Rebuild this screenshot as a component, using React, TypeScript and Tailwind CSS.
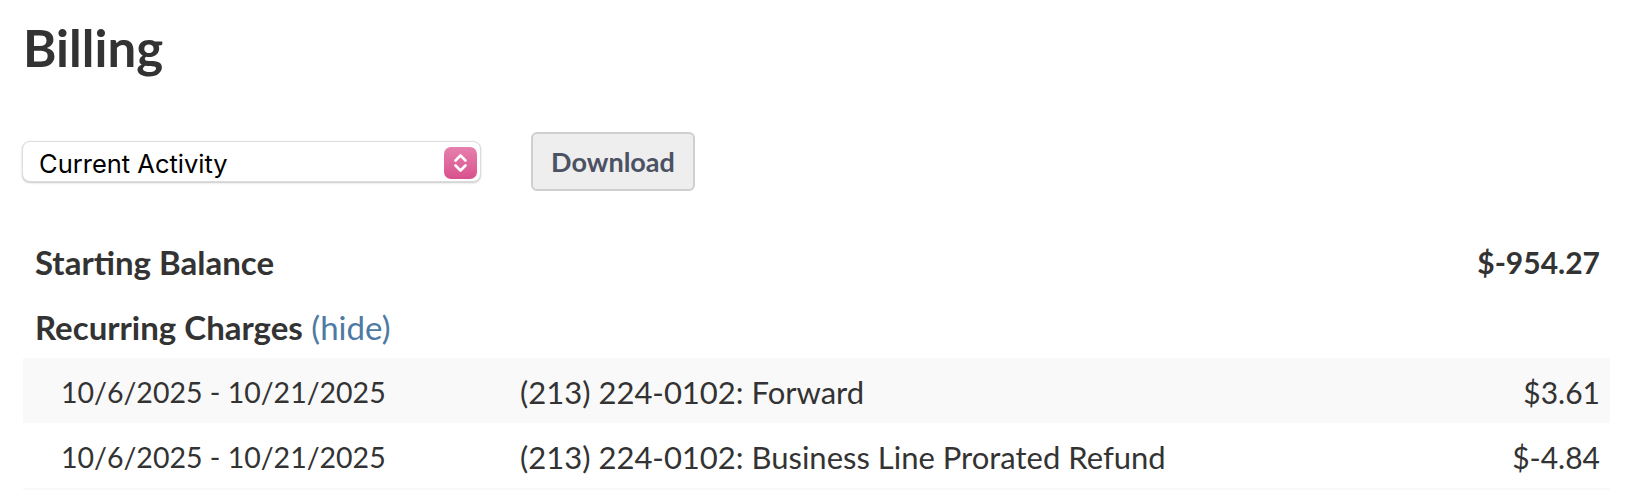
import { useState } from 'react'

type Charge = {
  period: string
  description: string
  amount: string
}

const recurring: Charge[] = [
  { period: '10/6/2025 - 10/21/2025', description: '(213) 224-0102: Forward', amount: '$3.61' },
  { period: '10/6/2025 - 10/21/2025', description: '(213) 224-0102: Business Line Prorated Refund', amount: '$-4.84' },
]

function Stepper() {
  return (
    <div className="absolute right-[3px] top-[5px] flex h-[32px] w-[33px] items-center justify-center rounded-[7px] bg-gradient-to-b from-[#e680ad] to-[#d8518d]">
      <svg width="33" height="32" viewBox="0 0 33 32" fill="none">
        <path d="M11.5 13.5 L16.5 8.5 L21.5 13.5" stroke="white" strokeWidth="2.6" strokeLinecap="round" strokeLinejoin="round" />
        <path d="M11.5 18.5 L16.5 23.5 L21.5 18.5" stroke="white" strokeWidth="2.6" strokeLinecap="round" strokeLinejoin="round" />
      </svg>
    </div>
  )
}

export default function App() {
  const [showRecurring, setShowRecurring] = useState(true)

  return (
    <div className="h-[490px] overflow-hidden bg-white pl-[23px] pr-[38px] font-[Lato,sans-serif] text-[#333333]">
      {/* Header */}
      <h1 className="mt-[18px] text-[51px] font-bold leading-[60px]">Billing</h1>

      {/* Toolbar */}
      <div className="mt-[54px] flex h-[59px] items-center gap-[50px]">
        <div className="relative -ml-px h-[41px] w-[459px] rounded-[8px] border border-[#dcdcdc] bg-white shadow-[0_1px_2px_rgba(0,0,0,0.22)]">
          <div className="pl-[16px] pt-[2px] font-[Inter,sans-serif] text-[25.5px] leading-[39px] text-black">Current Activity</div>
          <Stepper />
        </div>
        <button className="flex h-[59px] w-[164px] items-center justify-center rounded-[6px] border-2 border-[#cfcfcf] bg-[#eeeeee] pt-[2px] text-[27px] font-bold text-[#4b5263]">
          Download
        </button>
      </div>

      {/* Activity */}
      <div className="mt-[37px]">
        <div className="flex h-[62px] items-start justify-between pl-[12px] pr-[10px] pt-[15px] text-[33px] font-bold leading-[38px]">
          <span>Starting Balance</span>
          <span className="text-[30px]">$-954.27</span>
        </div>
        <div className="h-[68px] pl-[12px] pt-[18px] text-[33px] leading-[38px]">
          <span className="font-bold">Recurring Charges</span>{' '}
          <button className="text-[#4d7aa3]" onClick={() => setShowRecurring(!showRecurring)}>
            ({showRecurring ? 'hide' : 'show'})
          </button>
        </div>
        {showRecurring &&
          recurring.map((c, i) => (
            <div
              key={i}
              className={`flex h-[65px] items-start pl-[38px] pr-[10px] pt-[16px] text-[30px] leading-[36px] ${i % 2 === 0 ? 'bg-[#f9f9f9]' : 'bg-white'}`}
            >
              <span className="w-[459px] shrink-0 text-[28.5px]">{c.period}</span>
              <span className="flex-1 text-[31px]">{c.description}</span>
              <span>{c.amount}</span>
            </div>
          ))}
        {/* next striped row, below the fold */}
        <div className="h-[65px] bg-[#f9f9f9]" />
      </div>
    </div>
  )
}
